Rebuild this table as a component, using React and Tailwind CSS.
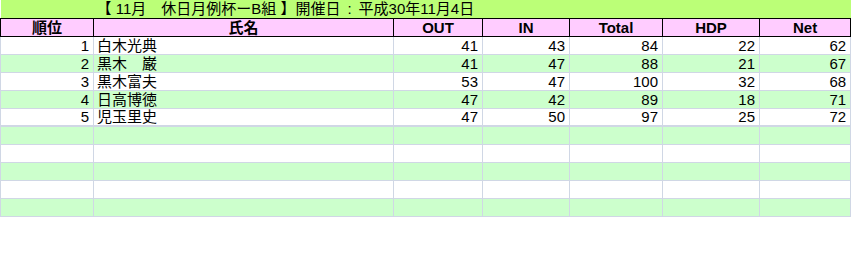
import React from "react";

const rows = [
    { rank: 1, name: "白木光典", out: 41, in: 43, total: 84, hdp: 22, net: 62 },
    { rank: 2, name: "黒木　巌", out: 41, in: 47, total: 88, hdp: 21, net: 67 },
    { rank: 3, name: "黒木富夫", out: 53, in: 47, total: 100, hdp: 32, net: 68 },
    { rank: 4, name: "日高博徳", out: 47, in: 42, total: 89, hdp: 18, net: 71 },
    { rank: 5, name: "児玉里史", out: 47, in: 50, total: 97, hdp: 25, net: 72 },
];

const widths = [93, 300, 89, 87, 93, 97, 91];
const heads = ["順位", "氏名", "OUT", "IN", "Total", "HDP", "Net"];

const App = () => {
    return (
        <div className="w-[855px] h-[253px] bg-white" style={{ fontFamily: '"Liberation Sans", "Noto Sans CJK JP", sans-serif' }}>
            <table className="table-fixed border-collapse w-[851px] text-[15px] text-black leading-none">
                <colgroup>
                    {widths.map((w, i) => (
                        <col key={i} style={{ width: w }} />
                    ))}
                </colgroup>
                <tbody>
                    {/* title */}
                    <tr className="h-[18px] bg-[#bbff77]">
                        <td className="p-0"></td>
                        <td colSpan={6} className="p-0 pl-[3px] whitespace-nowrap">
                            【 11月　休日月例杯ーB組 】開催日<span className="px-[7px]">:</span>平成30年11月4日
                        </td>
                    </tr>
                    {/* header */}
                    <tr className="h-[18px] bg-[#ffccff]">
                        {heads.map((h) => (
                            <td key={h} className="p-0 border border-black text-center font-bold">
                                {h}
                            </td>
                        ))}
                    </tr>
                    {rows.map((r, i) => (
                        <tr key={r.rank} className={`h-[18px] ${i % 2 ? "bg-[#ccffcc]" : "bg-white"}`}>
                            <td className="p-0 pr-[4px] border border-[#d0d7e5] text-right">{r.rank}</td>
                            <td className="p-0 pl-[3px] border border-[#d0d7e5] text-left">{r.name}</td>
                            <td className="p-0 pr-[4px] border border-[#d0d7e5] text-right">{r.out}</td>
                            <td className="p-0 pr-[4px] border border-[#d0d7e5] text-right">{r.in}</td>
                            <td className="p-0 pr-[4px] border border-[#d0d7e5] text-right">{r.total}</td>
                            <td className="p-0 pr-[4px] border border-[#d0d7e5] text-right">{r.hdp}</td>
                            <td className="p-0 pr-[4px] border border-[#d0d7e5] text-right">{r.net}</td>
                        </tr>
                    ))}
                    {[0, 1, 2, 3, 4].map((k) => (
                        <tr key={k} className={`h-[18px] ${k % 2 ? "bg-white" : "bg-[#ccffcc]"}`}>
                            {widths.map((_, j) => (
                                <td key={j} className={`p-0 border border-[#d0d7e5] ${k === 0 ? "border-t-2" : ""}`}></td>
                            ))}
                        </tr>
                    ))}
                </tbody>
            </table>
        </div>
    );
};

export default App;
